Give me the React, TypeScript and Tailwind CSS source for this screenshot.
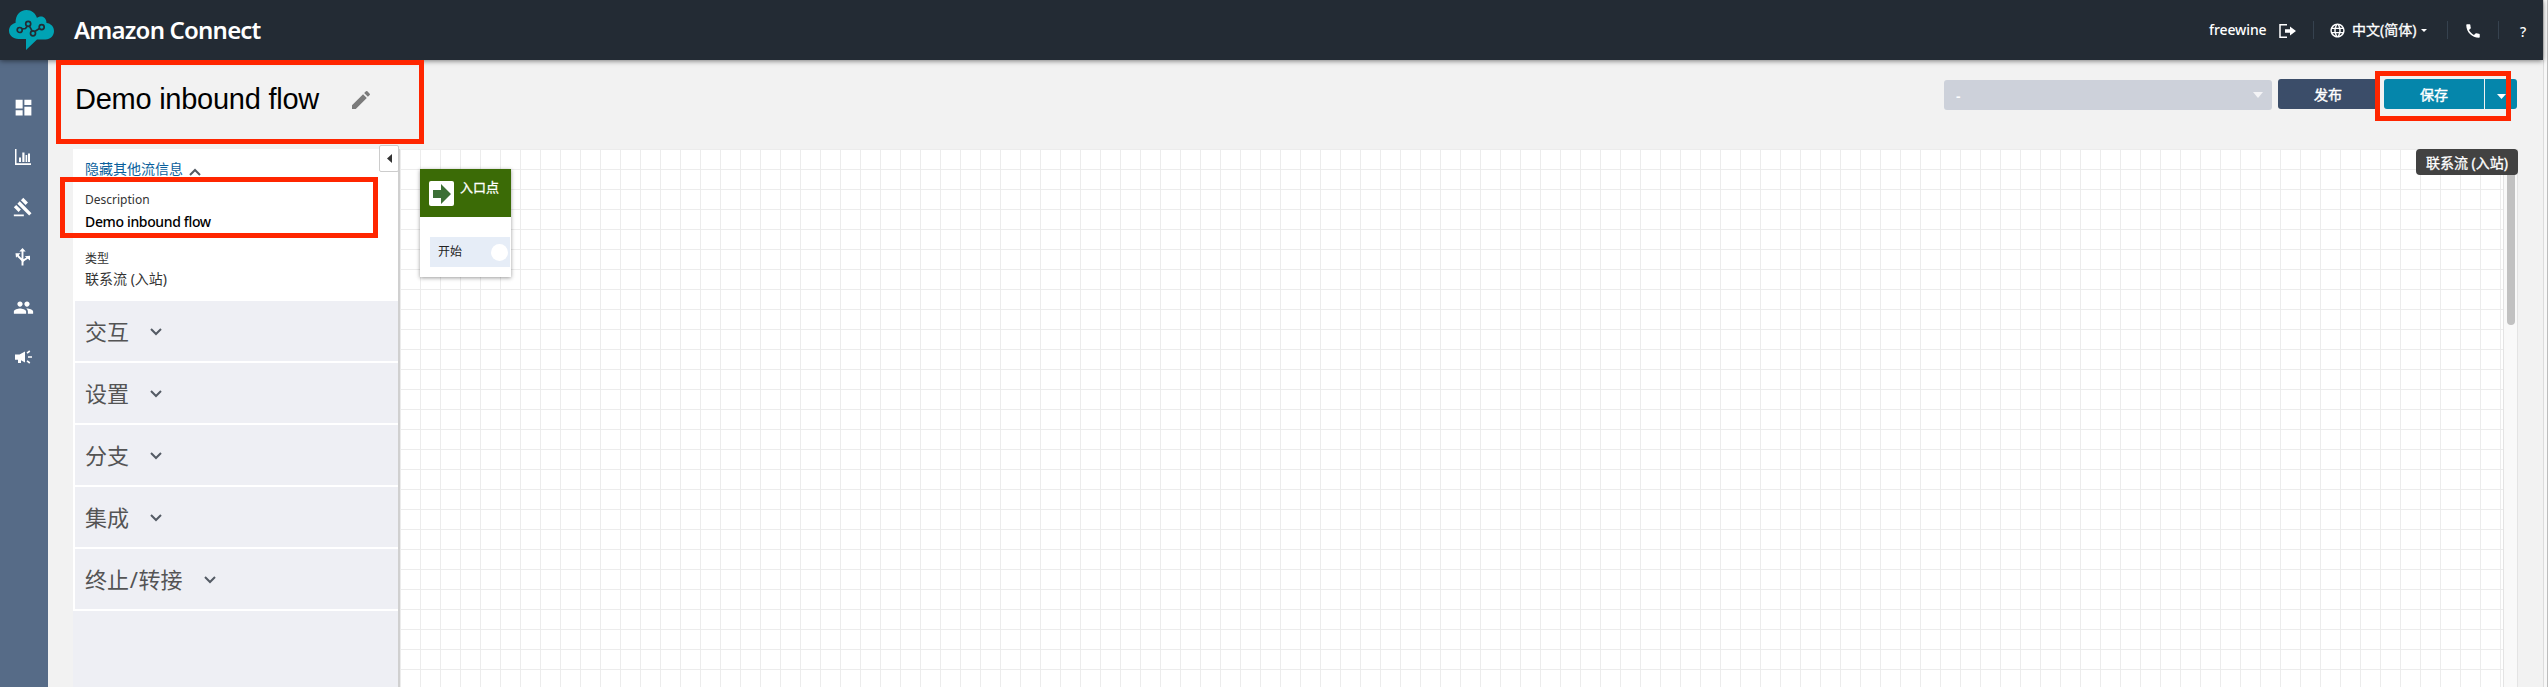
import React from "react";
import {
  MdDashboard, MdGavel, MdPeople, MdEdit, MdPhone, MdLanguage,
} from "react-icons/md";

const ember = "font-['Noto_Sans','Noto_Sans_CJK_SC',sans-serif]";

function Logo() {
  return (
    <svg className="absolute left-[9px] top-[10px] h-[40px] w-[45px]" viewBox="0 0 45 40">
      <path fill="#00a3b4" d="M17 29H9.500C4 29 0 25.300 0 20.800C0 16.800 2.800 13.600 6.500 13C6.500 5 11 0 17.500 0C22.500 0 26.500 3 28 8C29 7 30.500 6.500 32 6.500C35 6.500 37.500 9 37.500 13C42 13.500 45 16.800 45 21C45 25.800 41.500 29.500 36.500 29.500H28L17 40V29Z" />
      <g fill="none" stroke="#232b34" strokeWidth="1.700">
        <path d="M13 19L16.500 18.500L18.300 16M20.300 15.800L23.200 21.200M26.200 21.300L30.400 18.500" />
        <circle cx="10.700" cy="20" r="2.500" /><circle cx="19.200" cy="13.800" r="2.500" />
        <circle cx="24" cy="23.300" r="2.500" /><circle cx="32.700" cy="17.100" r="2.500" />
      </g>
    </svg>
  );
}

function ChartIcon() {
  return (
    <svg className="h-4 w-4" viewBox="0 0 16 16" fill="#fff">
      <path d="M0 0h1.500v14.300H16V16H0zM4 8.500h2V13H4zM7.300 3.500h2.200V13H7.300zM10.600 6h1.600v7h-1.600zM13 4.500h2V13h-2z" />
    </svg>
  );
}

function RouteIcon() {
  return (
    <svg className="h-[18px] w-4" viewBox="0 0 16 18">
      <g fill="none" stroke="#fff" strokeWidth="1.900">
        <path d="M7.500 17.500V3M7.500 13.500C7.500 10.500 3 10 2.500 6.500M7.500 14.500C7.500 11 12 12 12.500 9" />
      </g>
      <path fill="#fff" d="M7.500 0L10.700 3.600H4.300zM0.500 5.200H5.500L1 9.700zM15 7.700V12.400L9.700 8.200z" />
    </svg>
  );
}

function HornIcon() {
  return (
    <svg className="h-[14px] w-[17px]" viewBox="0 0 17 14">
      <path fill="#fff" d="M0 4.500h4.500L10 1.500v11L6 10.200V13H3V9.700H0z" />
      <path stroke="#fff" strokeWidth="1.600" d="M12 3.200L14.800 1M13 7H17M12 10.800L14.800 13" />
    </svg>
  );
}

function Chevron({ up = false }: { up?: boolean }) {
  return (
    <svg className="h-[8px] w-[12px] shrink-0" viewBox="0 0 12 8" fill="none" stroke="#545b64" strokeWidth="2">
      <path d={up ? "M1 7L6 2L11 7" : "M1 1L6 6L11 1"} />
    </svg>
  );
}

const nav = [
  <MdDashboard className="size-[21px]" />,
  <ChartIcon />,
  <MdGavel className="size-[20px]" />,
  <RouteIcon />,
  <MdPeople className="size-[21px]" />,
  <HornIcon />,
];
const groups = ["交互", "设置", "分支", "集成", "终止/转接"];

export default function App() {
  return (
    <div className={`relative flex h-[687px] w-[2548px] overflow-hidden bg-[#f8f8f8] ${ember}`}>
      <div className="flex w-[2543px] flex-col bg-[#f2f2f2]">
        <header className="relative z-10 flex h-[60px] shrink-0 items-center bg-[#232b34] text-white shadow-[0_1px_5px_rgba(0,0,0,0.5)]">
          <Logo />
          <h1 className="ml-[74px] w-[2134px] shrink-0 whitespace-nowrap text-[24px] font-semibold leading-none tracking-[-0.8px]">Amazon Connect</h1>
          <div className="flex h-[60px] items-center text-[14px] whitespace-nowrap">
            <span className="w-[71px] pb-[2px] pl-px font-medium tracking-[-0.1px]">freewine</span>
            <svg className="mt-[2px] h-[14px] w-[17px]" viewBox="0 0 17 14">
              <path d="M8 .8H1V13.200H8" fill="none" stroke="#fff" strokeWidth="1.500" />
              <path d="M6 5.300h5V2.500L17 7l-6 4.500V8.700H6z" fill="#fff" />
            </svg>
            <i className="ml-[17px] h-[18px] w-px bg-[#36424f]" />
            <MdLanguage className="ml-[15px] size-[17px]" />
            <span className="ml-[6px] w-[67px] pb-[2px] [-webkit-text-stroke:0.3px]">中文(简体)</span>
            <svg className="ml-[2px] h-[3px] w-[6px]" viewBox="0 0 6 3" fill="#fff"><path d="M0 0H6L3 3z" /></svg>
            <i className="ml-[20px] h-[18px] w-px bg-[#36424f]" />
            <MdPhone className="ml-[16px] mt-[2px] size-[18px]" />
            <i className="ml-[16px] h-[18px] w-px bg-[#36424f]" />
            <span className="ml-[21px] mt-[2px] font-medium">?</span>
          </div>
        </header>
        <div className="flex min-h-0 flex-1">
          <nav className="flex w-[48px] shrink-0 flex-col items-center bg-[#566b87] pt-[22px] text-white">
            {nav.map((icon, i) => (
              <div key={i} className="flex h-[50px] w-full items-center justify-center pr-[2px]">{icon}</div>
            ))}
          </nav>
          <main className="flex min-w-0 flex-1 flex-col pl-[25px]">
            <div className="flex h-[89px] shrink-0 items-start">
              <h2 className="mt-[21px] w-[276px] shrink-0 pl-[2px] whitespace-nowrap font-['Liberation_Sans',sans-serif] text-[29px] leading-[36px] tracking-[-0.25px] text-black">Demo inbound flow</h2>
              <MdEdit className="mt-[28px] size-[24px] text-[#7b7b7b]" />
              <div className="ml-[1571px] mt-[19px] flex text-[14px] text-white">
                <div className="mt-px flex h-[30px] w-[328px] items-center justify-between rounded-[3px] bg-[#cdd1da] pl-[12px] pr-[9px] font-semibold">
                  <span>-</span>
                  <svg className="h-[6px] w-[10px]" viewBox="0 0 10 6" fill="#f4f4f6"><path d="M0 0H10L5 6z" /></svg>
                </div>
                <button className="ml-[6px] h-[30px] w-[100px] rounded-[3px] bg-[#3b4d69] [-webkit-text-stroke:0.4px]">发布</button>
                <button className="ml-[6px] h-[30px] w-[100px] rounded-l-[3px] bg-[#0586ab] pt-px [-webkit-text-stroke:0.4px]">保存</button>
                <button className="ml-px flex h-[30px] w-[32px] items-center justify-center rounded-r-[3px] bg-[#0586ab] pt-[4px]">
                  <svg className="h-[5px] w-[9px]" viewBox="0 0 9 5" fill="#fff"><path d="M0 0H9L4.500 5z" /></svg>
                </button>
              </div>
            </div>
            <div className="flex min-h-0 flex-1">
              <aside className="relative flex w-[327px] shrink-0 flex-col border-r-2 border-[#d0d0d0] bg-[#eeeff4]">
                <div className="flex h-[152px] shrink-0 flex-col bg-white pl-[12px] text-[14px] text-[#333]">
                  <div className="mt-[8px] flex h-[22px] items-center text-[#0b5f9c]">
                    <span className="w-[104px]">隐藏其他流信息</span><span className="mt-[7px] flex"><Chevron up /></span>
                  </div>
                  <span className="mt-[13px] text-[12px] leading-[16px]">Description</span>
                  <span className="mt-[4px] text-[14px] font-medium leading-[20px] tracking-[-0.35px] text-black">Demo inbound flow</span>
                  <span className="mt-[19px] text-[12px] leading-[16px]">类型</span>
                  <span className="mt-[2px] text-[14px] leading-[20px]">联系流 (入站)</span>
                </div>
                {groups.map((g) => (
                  <div key={g} className="h-[62px] shrink-0 border-b-2 border-l-2 border-white">
                    <div className="flex h-[60px] items-center gap-[21px] pl-[10px] text-[22px] text-[#545454]"><span>{g.split("/").map((part, i) => (
                      <React.Fragment key={part}>{i > 0 && <span className="px-[0.7px]">/</span>}{part}</React.Fragment>
                    ))}</span><span className="mt-[2px] flex"><Chevron /></span></div>
                  </div>
                ))}
                <div className="absolute left-[306px] top-[-4px] flex h-[27px] w-[20px] items-center justify-center rounded-[2px] border border-[#ccc] bg-white">
                  <svg className="h-[9px] w-[5px]" viewBox="0 0 5 9" fill="#333"><path d="M5 0V9L0 4.500z" /></svg>
                </div>
              </aside>
              <div className="relative flex w-[2118px] bg-white">
                <div className="relative w-[2103px] bg-[linear-gradient(to_right,#ececec_1px,transparent_1px),linear-gradient(to_bottom,#ececec_1px,transparent_1px)] bg-[size:20px_20px]">
                  <div className="absolute left-[20px] top-[20px] h-[108px] w-[91px] bg-white shadow-[0_1px_4px_rgba(0,0,0,0.4)]">
                    <div className="flex h-[48px] bg-[#3b6b06] pl-[9px] pt-[12px] text-[13px] text-white">
                      <div className="flex h-[25px] w-[25px] items-center justify-center rounded-[2px] bg-white">
                        <svg className="h-[20px] w-[18px]" viewBox="0 0 18 20" fill="#3c6f36"><path d="M0 6H8V0L18 10L8 20V14H0z" /></svg>
                      </div>
                      <span className="-mt-[3px] ml-[6px] whitespace-nowrap [-webkit-text-stroke:0.3px]">入口点</span>
                    </div>
                    <div className="ml-[10px] mt-[20px] flex h-[30px] w-[80px] items-center justify-between bg-[#e6edf7] pl-[8px] pr-[2px] text-[12px] text-[#222]">
                      <span>开始</span><i className="size-[17px] rounded-full bg-white" />
                    </div>
                  </div>
                </div>
                <div className="w-[15px] border-x border-[#e4e4e4] bg-[#f9f9f9] pl-[3px]">
                  <div className="h-[176px] w-[8px] rounded-b-[4px] bg-[#c1c1c1]" />
                </div>
                <div className="absolute left-[2016px] top-0 flex h-[26px] w-[102px] items-center justify-center rounded-[4px] bg-[#424242] text-[14px] text-white [-webkit-text-stroke:0.3px]">联系流 (入站)</div>
              </div>
            </div>
          </main>
        </div>
      </div>
      <div className="w-[5px] border-l border-r border-l-[#dcdcdc] border-r-[#bdbdbd]" />
      <div className="absolute left-[56px] top-[60px] z-20 h-[84px] w-[368px] border-[5px] border-[#ff2600]" />
      <div className="absolute left-[60px] top-[177px] z-20 h-[61px] w-[318px] border-[5px] border-[#ff2600]" />
      <div className="absolute left-[2375px] top-[71px] z-20 h-[50px] w-[136px] border-[5px] border-[#ff2600]" />
    </div>
  );
}
